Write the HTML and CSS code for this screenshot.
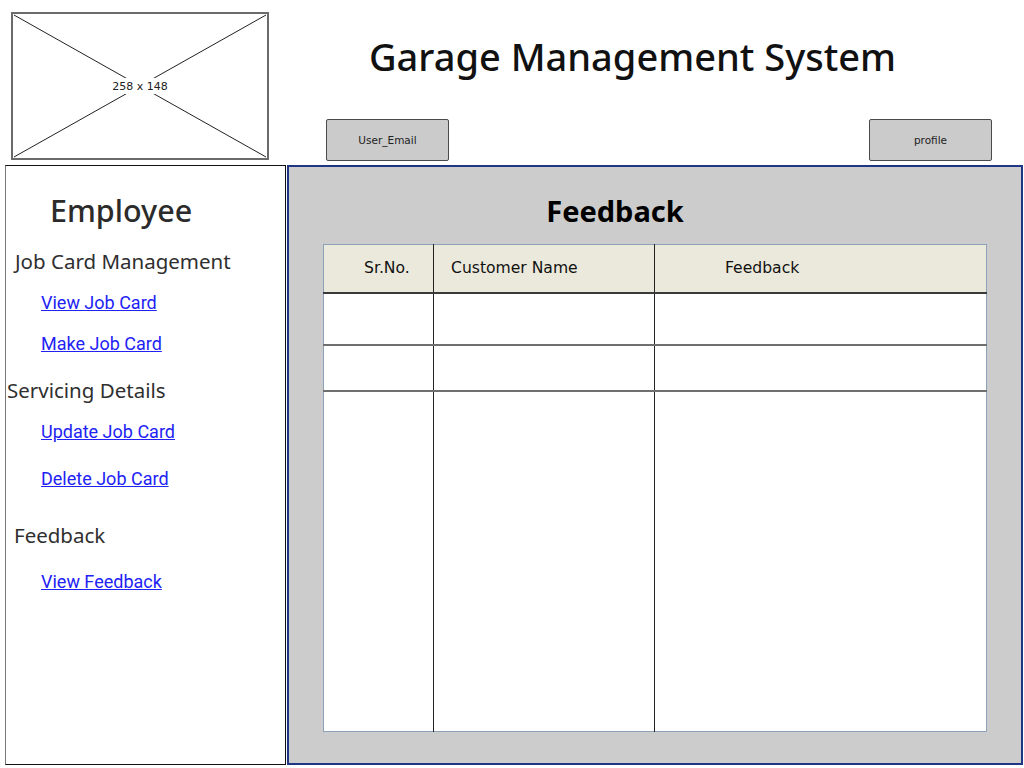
FILE: index.html
```html
<!DOCTYPE html>
<html lang="en">
<head>
<meta charset="utf-8">
<title>Garage Management System</title>
<link rel="stylesheet" href="styles.css">
</head>
<body>
<div class="top">
  <div class="logo-cell">
    <svg class="placeholder" width="258" height="148" viewBox="0 0 258 148">
      <rect x="1" y="1" width="256" height="146" fill="#fff" stroke="#6b6b6b" stroke-width="2"/>
      <line x1="3" y1="3" x2="255" y2="145" stroke="#222" stroke-width="1"/>
      <line x1="255" y1="3" x2="3" y2="145" stroke="#222" stroke-width="1"/>
      <rect x="100" y="66" width="58" height="16" fill="#fff"/>
      <text x="129" y="78" text-anchor="middle" class="ph-text">258 x 148</text>
    </svg>
  </div>
  <div class="head">
    <h1 class="title">Garage Management System</h1>
    <div class="buttons">
      <button class="btn">User_Email</button>
      <button class="btn">profile</button>
    </div>
  </div>
</div>
<div class="bottom">
  <nav class="sidebar">
    <div class="role">Employee</div>
    <div class="section s-jcm">Job Card Management</div>
    <a class="link l-view" href="#">View Job Card</a>
    <a class="link l-make" href="#">Make Job Card</a>
    <div class="section s-serv">Servicing Details</div>
    <a class="link l-update" href="#">Update Job Card</a>
    <a class="link l-delete" href="#">Delete Job Card</a>
    <div class="section s-fb">Feedback</div>
    <a class="link l-vfb" href="#">View Feedback</a>
  </nav>
  <main class="main">
    <h2 class="heading">Feedback</h2>
    <table class="grid">
      <colgroup>
        <col class="c1"><col class="c2"><col class="c3">
      </colgroup>
      <thead>
        <tr>
          <th class="h1c">Sr.No.</th>
          <th class="h2c">Customer Name</th>
          <th class="h3c">Feedback</th>
        </tr>
      </thead>
      <tbody>
        <tr class="r1"><td></td><td></td><td></td></tr>
        <tr class="r2"><td></td><td></td><td></td></tr>
        <tr class="r3"><td></td><td></td><td></td></tr>
      </tbody>
    </table>
  </main>
</div>
</body>
</html>
```
FILE: styles.css
```css
* { box-sizing: border-box; }
html, body { margin: 0; padding: 0; background: #fff; }
body { width: 1024px; height: 768px; overflow: hidden; font-family: "Noto Sans", sans-serif; }

.top { display: flex; height: 165px; }
.logo-cell { width: 287px; padding: 12px 0 0 11px; }
.placeholder { display: block; }
.ph-text { font-family: "DejaVu Sans", sans-serif; font-size: 11px; fill: #222; }

.head { flex: 1; display: flex; flex-direction: column; }
.title {
  margin: 34px 0 0 0;
  padding-right: 46px;
  height: 44px;
  line-height: 44px;
  text-align: center;
  font-family: "Noto Sans", sans-serif;
  font-weight: 500;
  font-size: 38px;
  color: #111;
}
.buttons { display: flex; justify-content: space-between; padding: 0 32px 0 39px; margin-top: 41px; }
.btn {
  width: 123px;
  height: 42px;
  background: #cbcbcb;
  border: 1px solid #4a4a4a;
  border-radius: 2px;
  font-family: "DejaVu Sans", sans-serif;
  font-size: 10.5px;
  color: #222;
  padding: 0;
}

.bottom { display: flex; height: 603px; }
.sidebar {
  margin-left: 5px;
  width: 281px;
  height: 600px;
  border: 1px solid #111;
  border-left-color: #777;
  padding-top: 24px;
  display: flex;
  flex-direction: column;
  align-items: flex-start;
}
.role {
  margin-left: 44px;
  height: 40px;
  line-height: 40px;
  font-size: 30.5px;
  font-weight: 500;
  color: #2b2b2b;
}
.section {
  height: 28px;
  line-height: 28px;
  font-size: 20.5px;
  color: #2f2f2f;
}
.s-jcm { margin: 17px 0 0 9px; }
.s-serv { margin: 20px 0 0 1px; }
.s-fb { margin: 30px 0 0 8px; }
.link {
  margin-left: 35px;
  height: 24px;
  line-height: 24px;
  font-family: Roboto, sans-serif;
  font-size: 18px;
  color: #2222f5;
  text-decoration: underline;
}
.l-view { margin-top: 16px; }
.l-make { margin-top: 17px; }
.l-update { margin-top: 16px; }
.l-delete { margin-top: 23px; }
.l-vfb { margin-top: 21px; }

.main {
  margin-left: 1px;
  width: 736px;
  height: 600px;
  background: #cccccc;
  border: 2px solid #1f3585;
  padding-top: 24px;
}
.heading {
  margin: 0;
  height: 40px;
  line-height: 40px;
  padding-right: 80px;
  text-align: center;
  font-family: "Noto Sans", sans-serif;
  font-weight: 700;
  font-size: 29px;
  color: #000;
}
.grid {
  margin: 13px 0 0 34px;
  width: 663px;
  height: 488px;
  border-collapse: collapse;
  table-layout: fixed;
  background: #fff;
  border: 1px solid #8da2b8;
}
.c1 { width: 110px; }
.c2 { width: 221px; }
.c3 { width: 332px; }
.grid th {
  height: 48px;
  background: #ebe9db;
  border-bottom: 2px solid #3a3a3a;
  font-family: "DejaVu Sans", sans-serif;
  font-weight: 400;
  font-size: 15.6px;
  color: #111;
  text-align: left;
  padding: 0;
}
.h1c { padding-left: 40px !important; }
.h2c { padding-left: 17px !important; }
.h3c { padding-left: 70px !important; }
.grid th + th, .grid td + td { border-left: 1px solid #222; }
.grid td { padding: 0; }
.r1 td { height: 52px; border-bottom: 2px solid #6f6f6f; }
.r2 td { height: 46px; border-bottom: 2px solid #6f6f6f; }
```
